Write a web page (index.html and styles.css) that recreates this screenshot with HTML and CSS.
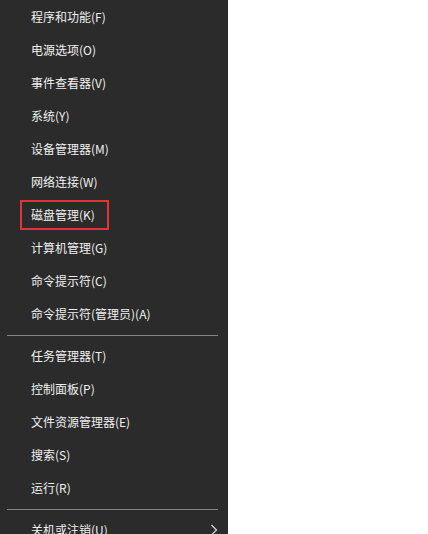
FILE: index.html
```html
<!DOCTYPE html>
<html lang="zh-CN">
<head>
<meta charset="utf-8">
<link rel="stylesheet" href="styles.css">
</head>
<body>
<div class="page">
  <nav class="menu">
    <div class="item">程序和功能(F)</div>
    <div class="item">电源选项(O)</div>
    <div class="item">事件查看器(V)</div>
    <div class="item">系统(Y)</div>
    <div class="item">设备管理器(M)</div>
    <div class="item">网络连接(W)</div>
    <div class="item marked">磁盘管理(K)<span class="highlight"></span></div>
    <div class="item">计算机管理(G)</div>
    <div class="item">命令提示符(C)</div>
    <div class="item">命令提示符(管理员)(A)</div>
    <div class="sep"></div>
    <div class="item">任务管理器(T)</div>
    <div class="item">控制面板(P)</div>
    <div class="item">文件资源管理器(E)</div>
    <div class="item">搜索(S)</div>
    <div class="item">运行(R)</div>
    <div class="sep"></div>
    <div class="item sub">关机或注销(U)
      <svg class="chev" width="8" height="12" viewBox="0 0 8 12"><path d="M1.5 1 L6.5 6 L1.5 11" fill="none" stroke="#d8d8d8" stroke-width="1.2"/></svg>
    </div>
  </nav>
</div>
</body>
</html>
```
FILE: styles.css
```css
html, body {
  margin: 0;
  padding: 0;
  background: #ffffff;
  overflow: hidden;
}
.page {
  width: 428px;
  height: 534px;
  overflow: hidden;
  display: flex;
}
.menu {
  width: 228px;
  background: #2b2b2b;
  display: flex;
  flex-direction: column;
  font-family: "Noto Sans CJK SC", "Microsoft YaHei", sans-serif;
  font-size: 12px;
  color: #f0f0f0;
  flex-shrink: 0;
}
.item {
  height: 33px;
  line-height: 33px;
  padding-left: 31px;
  position: relative;
  flex-shrink: 0;
  white-space: nowrap;
}
.highlight {
  position: absolute;
  left: 20px;
  top: 2px;
  width: 89px;
  height: 30px;
  box-sizing: border-box;
  border: 2px solid #e53238;
}
.sep {
  height: 1px;
  margin: 5px 10px 3px 7px;
  background: #858585;
  flex-shrink: 0;
}
.sub {
  display: flex;
  align-items: center;
}
.chev {
  margin-left: auto;
  margin-right: 10px;
}
```
